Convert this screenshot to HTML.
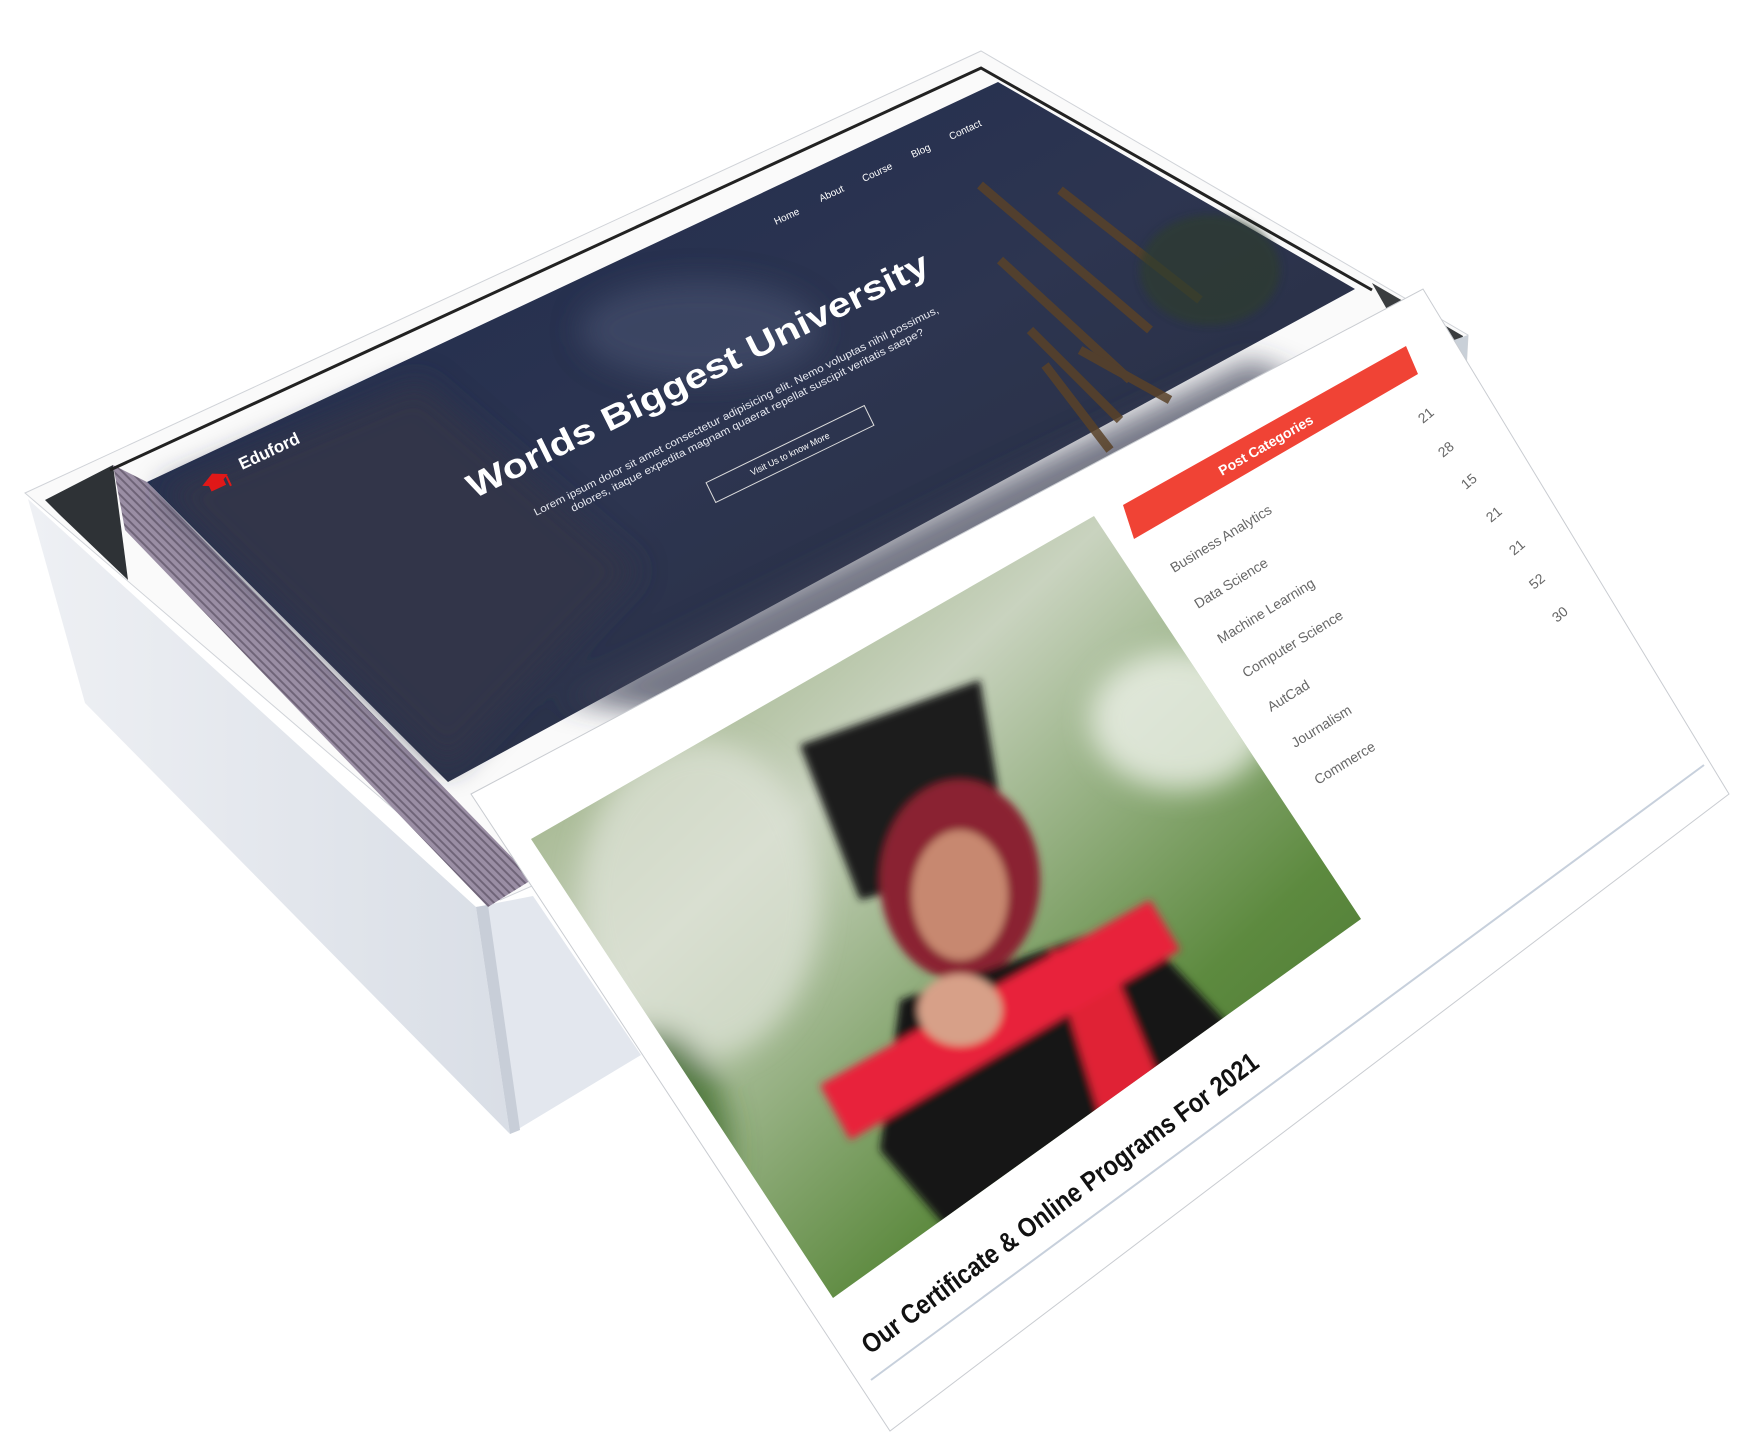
<!DOCTYPE html>
<html><head><meta charset="utf-8"><style>
html,body{margin:0;padding:0;background:#fff;width:1758px;height:1439px;overflow:hidden}
svg{display:block}
text{font-family:"Liberation Sans",sans-serif}
</style></head><body>
<svg width="1758" height="1439" viewBox="0 0 1758 1439" xmlns="http://www.w3.org/2000/svg">
<defs>
<linearGradient id="sky" x1="0" y1="0" x2="1" y2="1">
<stop offset="0" stop-color="#1d2a4e"/><stop offset="0.5" stop-color="#2d3550"/><stop offset="1" stop-color="#262b3a"/>
</linearGradient>
<linearGradient id="lface" x1="0" y1="0" x2="1" y2="0">
<stop offset="0" stop-color="#eef0f4"/><stop offset="1" stop-color="#d9dee6"/>
</linearGradient>
<pattern id="pages" width="6" height="6" patternUnits="userSpaceOnUse" patternTransform="rotate(45)">
<rect width="6" height="6" fill="#9a8ea4"/><rect width="6" height="2" fill="#6f6478"/>
</pattern>
<linearGradient id="photo" x1="0" y1="0" x2="1" y2="1">
<stop offset="0" stop-color="#7e9a5e"/><stop offset="0.35" stop-color="#c9d3bf"/><stop offset="0.7" stop-color="#5d8a3f"/><stop offset="1" stop-color="#3f6b2a"/>
</linearGradient>
<filter id="blur"><feGaussianBlur stdDeviation="14"/></filter>
<filter id="blur2"><feGaussianBlur stdDeviation="4"/></filter>
<clipPath id="pclip"><polygon points="531,839 1094,516 1361,919 833,1298"/></clipPath>
</defs>

<!-- box top rim -->
<polygon points="25,493 981,51 1468,335 1460,480 500,900" fill="#fafafa" stroke="#d0d3d8" stroke-width="1"/>
<!-- box left face -->
<polygon points="28,499 476,907 510,1134 85,703" fill="url(#lface)"/>
<!-- box front face -->
<polygon points="476,907 533,896 641,1055 510,1134" fill="#e3e7ee"/>
<polygon points="476,907 488,905 520,1130 510,1134" fill="#c8ced8"/>
<!-- inner dark wall -->
<polygon points="45,500 113,465 128,580 60,515" fill="#2e3236"/>
<!-- pages stack -->
<polygon points="113,465 147,482 533,879 488,907 125,530" fill="url(#pages)"/>
<!-- right dark gap -->
<polygon points="1372,283 1463,336 1450,390 1410,350" fill="#3a3d3f"/>
<polygon points="1440,345 1468,335 1460,470 1440,440" fill="#c9d0d8"/>
<!-- top black line -->
<polyline points="110,470 981,68 1372,290" fill="none" stroke="#222" stroke-width="3"/>

<!-- hero -->
<polygon points="147,482 998,82 1355,289 448,782" fill="url(#sky)"/>
<g filter="url(#blur)">
<polygon points="160,490 420,380 640,570 448,770" fill="#30354a"/>
<polygon points="560,700 1000,480 1250,360 1300,380 700,720" fill="#3a4054" opacity="0.7"/>
<ellipse cx="700" cy="330" rx="120" ry="50" fill="#4a5270" opacity="0.6"/>
</g>
<g stroke="#5a4228" stroke-width="9" opacity="0.85">
<line x1="980" y1="185" x2="1150" y2="330"/><line x1="1060" y1="190" x2="1200" y2="300"/>
<line x1="1000" y1="260" x2="1130" y2="380"/><line x1="1030" y1="330" x2="1120" y2="420"/>
<line x1="1045" y1="365" x2="1110" y2="450"/><line x1="1080" y1="350" x2="1170" y2="400"/>
</g>
<ellipse cx="1210" cy="270" rx="70" ry="55" fill="#2f3d2f" opacity="0.7" filter="url(#blur2)"/>

<!-- logo -->
<g transform="translate(215,480) rotate(-25)">
<polygon points="-14,0 0,-7 14,0 0,7" fill="#e01818"/><rect x="-8" y="2" width="16" height="7" fill="#e01818"/>
<line x1="12" y1="1" x2="12" y2="12" stroke="#e01818" stroke-width="2"/>
</g>
<text transform="translate(242,470) rotate(-25)" font-size="17" fill="#fff" font-weight="600">Eduford</text>

<!-- nav -->
<g font-size="10" fill="#fff">
<text transform="translate(776,225) rotate(-25)">Home</text>
<text transform="translate(821,202) rotate(-25)">About</text>
<text transform="translate(864,182) rotate(-25)">Course</text>
<text transform="translate(913,158) rotate(-25)">Blog</text>
<text transform="translate(951,140) rotate(-25)">Contact</text>
</g>
<text transform="translate(474,499) rotate(-26.4)" font-size="34" font-weight="bold" fill="#fff" textLength="511" lengthAdjust="spacingAndGlyphs">Worlds Biggest University</text>
<text transform="translate(536,516) rotate(-26.8)" font-size="10.5" fill="#e6e8f0" textLength="452" lengthAdjust="spacingAndGlyphs">Lorem ipsum dolor sit amet consectetur adipisicing elit. Nemo voluptas nihil possimus,</text>
<text transform="translate(573,512) rotate(-26.8)" font-size="10.5" fill="#e6e8f0" textLength="394" lengthAdjust="spacingAndGlyphs">dolores, itaque expedita magnam quaerat repellat suscipit veritatis saepe?</text>
<g transform="translate(790,454) rotate(-26)">
<rect x="-88" y="-11" width="176" height="22" fill="none" stroke="#ddd" stroke-width="1"/>
<text x="0" y="3" font-size="9" fill="#fff" text-anchor="middle">Visit Us to know More</text>
</g>

<!-- card -->
<polygon points="471,794 1423,289 1729,794 890,1431" fill="#fff" stroke="#c9ccd1" stroke-width="1"/>
<!-- photo -->
<polygon points="531,839 1094,516 1361,919 833,1298" fill="url(#photo)"/>
<g clip-path="url(#pclip)">
<g filter="url(#blur)">
<ellipse cx="700" cy="900" rx="120" ry="160" fill="#dfe4d8" opacity="0.7"/>
<ellipse cx="1180" cy="720" rx="90" ry="70" fill="#eef1ea" opacity="0.8"/>
<ellipse cx="650" cy="1150" rx="80" ry="120" fill="#3e6a2c" opacity="0.8"/>
</g>
<g filter="url(#blur2)">
<polygon points="800,745 980,680 1010,860 860,900" fill="#1c1a1e"/>
<ellipse cx="960" cy="880" rx="80" ry="100" fill="#8a2030"/>
<ellipse cx="960" cy="895" rx="48" ry="65" fill="#c78870"/>
<polygon points="900,1000 1130,920 1300,1100 1000,1290 880,1150" fill="#141216"/>
<polygon points="1050,950 1110,960 1180,1130 1110,1150" fill="#e02434"/>
<polygon points="820,1085 1150,900 1180,950 850,1140" fill="#e8203a"/>
<ellipse cx="960" cy="1010" rx="42" ry="36" fill="#d7a088"/>
</g>
</g>
<!-- red bar -->
<polygon points="1123,505 1406,346 1418,374 1134,539" fill="#f04335"/>
<text transform="translate(1222,476) rotate(-30)" font-size="14" font-weight="bold" fill="#fff">Post Categories</text>
<g font-size="14" fill="#666">
<text transform="translate(1174,573) rotate(-31.5)">Business Analytics</text>
<text transform="translate(1198,609) rotate(-31.5)">Data Science</text>
<text transform="translate(1221,644) rotate(-31.5)">Machine Learning</text>
<text transform="translate(1246,678) rotate(-31.5)">Computer Science</text>
<text transform="translate(1271,712) rotate(-31.5)">AutCad</text>
<text transform="translate(1295,748) rotate(-31.5)">Journalism</text>
<text transform="translate(1318,785) rotate(-31.5)">Commerce</text>
<text transform="translate(1423,424) rotate(-40)">21</text>
<text transform="translate(1443,458) rotate(-40)">28</text>
<text transform="translate(1466,490) rotate(-40)">15</text>
<text transform="translate(1491,523) rotate(-40)">21</text>
<text transform="translate(1514,556) rotate(-40)">21</text>
<text transform="translate(1534,590) rotate(-40)">52</text>
<text transform="translate(1557,623) rotate(-40)">30</text>
</g>
<line x1="871" y1="1380" x2="1704" y2="765" stroke="#c7d0dc" stroke-width="2"/>
<text transform="translate(870,1355) rotate(-36.5)" font-size="27" font-weight="600" fill="#111" textLength="486" lengthAdjust="spacingAndGlyphs">Our Certificate &amp; Online Programs For 2021</text>
</svg>
</body></html>
